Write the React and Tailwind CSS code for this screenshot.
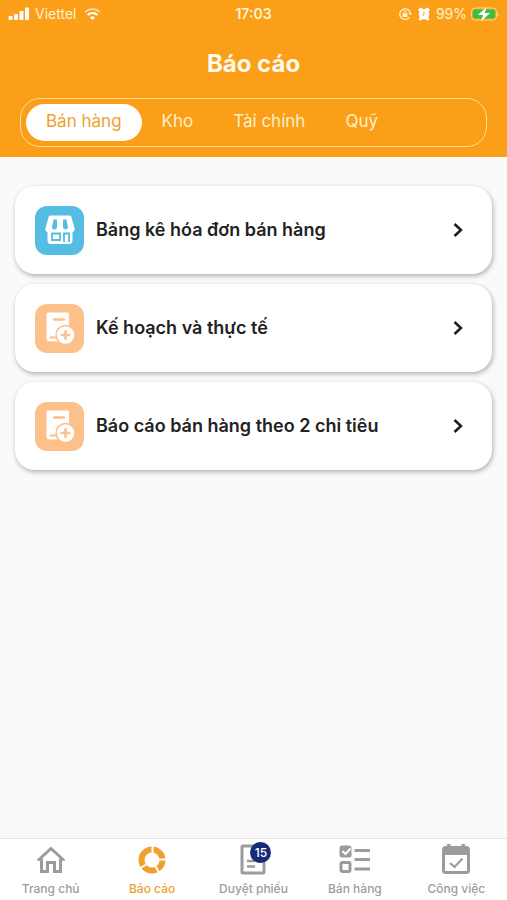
import { useState } from 'react';

const TABS = ['Bán hàng', 'Kho', 'Tài chính', 'Quỹ'];

const REPORTS = [
  { id: 'invoice', title: 'Bảng kê hóa đơn bán hàng', icon: StoreIcon, color: 'bg-[#55bce2]' },
  { id: 'plan', title: 'Kế hoạch và thực tế', icon: BillIcon, color: 'bg-[#fdc08a]' },
  { id: 'target', title: 'Báo cáo bán hàng theo 2 chỉ tiêu', icon: BillIcon, color: 'bg-[#fdc08a]' },
];

const NAV = [
  { id: 'home', label: 'Trang chủ', icon: HomeIcon },
  { id: 'report', label: 'Báo cáo', icon: DonutIcon },
  { id: 'approve', label: 'Duyệt phiếu', icon: DocIcon, badge: 15 },
  { id: 'sales', label: 'Bán hàng', icon: ChecklistIcon },
  { id: 'tasks', label: 'Công việc', icon: CalendarIcon },
];

function StoreIcon() {
  return (
    <svg width="30" height="30" viewBox="0 0 30 30" fill="none">
      <path d="M2.500 14h25v11.500a3.500 3.500 0 0 1-3.500 3.500H6a3.500 3.500 0 0 1-3.500-3.500Z" fill="#fff" />
      <path d="M5.500 0.500h19a2 2 0 0 1 1.800 1.300L29.500 13a3.600 3.600 0 0 1-7.200 1.500 3.700 3.700 0 0 1-7.300 0 3.700 3.700 0 0 1-7.300 0A3.600 3.600 0 0 1 0.500 13L3.700 1.800A2 2 0 0 1 5.500 0.500Z" fill="#fff" />
      <path d="M8.500 4.500H12V12a2.500 2.500 0 0 1-5 0ZM18 4.500h3.500L23 12a2.500 2.500 0 0 1-5 0Z" fill="#55bce2" />
      <path d="M7 18.500h8V25H7ZM19 27v-8.500h5V27" stroke="#55bce2" strokeWidth="1.800" />
    </svg>
  );
}

function BillIcon() {
  return (
    <svg width="30" height="32" viewBox="0 0 30 32" fill="none">
      <path d="M3 0.500h19.500a1.500 1.500 0 0 1 1.500 1.500v14H12v8.500H5.500a1 1 0 0 0 0 2h7v3H5a3.500 3.500 0 0 1-3.500-3.500V2A1.500 1.500 0 0 1 3 0.500Z" fill="#fff" />
      <path d="M9 7.500h10" stroke="#fdc08a" strokeWidth="2.400" strokeLinecap="round" />
      <circle cx="20.500" cy="23" r="10.200" fill="#fdc08a" />
      <circle cx="20.500" cy="23" r="8.700" fill="#fff" />
      <path d="M20.500 19.200v7.600M16.700 23h7.600" stroke="#fdc08a" strokeWidth="2.600" strokeLinecap="round" />
    </svg>
  );
}

function HomeIcon() {
  return (
    <svg width="32" height="32" viewBox="0 0 32 32" fill="none" stroke="currentColor" strokeWidth="3">
      <path d="M3.500 16 16 4.500 28.500 16M6.500 14.500v13h6v-9h7v9h6v-13" />
      <path d="M2 16h5M25 16h5" strokeWidth="1.500" />
    </svg>
  );
}

function DonutIcon() {
  return (
    <svg width="32" height="32" viewBox="0 0 32 32" fill="none">
      <circle cx="16" cy="16" r="10.500" stroke="currentColor" strokeWidth="6" />
      <path d="M16.500 10V0M21.500 15.500H32M19 21.500l4.500 8M11 20l-9 5.500" stroke="#fff" strokeWidth="2" />
    </svg>
  );
}

function DocIcon() {
  return (
    <svg width="32" height="32" viewBox="0 0 32 32" fill="none" stroke="currentColor" strokeWidth="3">
      <rect x="5" y="2" width="22" height="27" rx="1" />
      <path d="M10 17h8M10 22.500h8" strokeWidth="2.500" />
    </svg>
  );
}

function ChecklistIcon() {
  return (
    <svg width="32" height="32" viewBox="0 0 32 32" fill="none">
      <rect x="0.500" y="1.500" width="12" height="12" rx="2.500" fill="currentColor" />
      <path d="m3.500 7 3 3 5-5.500" stroke="#fff" strokeWidth="2" />
      <rect x="2" y="18.500" width="9" height="9" rx="1.500" stroke="currentColor" strokeWidth="3" />
      <path d="M15.500 6.500H31M15.500 15.500H31M15.500 25H31" stroke="currentColor" strokeWidth="3" />
    </svg>
  );
}

function CalendarIcon() {
  return (
    <svg width="32" height="32" viewBox="0 0 32 32" fill="none">
      <rect x="3.500" y="3.500" width="25" height="25" rx="2" stroke="currentColor" strokeWidth="3" />
      <path d="M3 3h26v8H3ZM7-1h3.500v5H7ZM21.500-1H25v5h-3.500Z" fill="currentColor" />
      <path d="m10 19 4.500 4 8-8.500" stroke="currentColor" strokeWidth="2.200" />
    </svg>
  );
}

function StatusBar() {
  return (
    <div className="grid grid-cols-3 items-center h-7 px-2 text-sm text-[#fff3d0]">
      <div className="flex items-center gap-1">
        <svg width="23" height="14" viewBox="0 0 23 14" fill="#fff">
          <rect x="0.500" y="9" width="4" height="4" rx="1" />
          <rect x="6" y="7" width="4" height="6" rx="1" />
          <rect x="11.500" y="4" width="4" height="9" rx="1" />
          <rect x="17" y="0.500" width="4" height="12.500" rx="1" />
        </svg>
        <span>Viettel</span>
        <svg className="ml-1" width="17" height="14" viewBox="0 0 17 14" fill="none" stroke="#fff">
          <path d="M1 5.200a10.500 10.500 0 0 1 15 0" strokeWidth="1.800" opacity="0.600" />
          <path d="M3.600 8a7 7 0 0 1 9.800 0" strokeWidth="2.200" />
          <path d="M8.500 13 6 10.500a3.600 3.600 0 0 1 5 0Z" fill="#fff" stroke="none" />
        </svg>
      </div>
      <span className="text-center font-semibold">17:03</span>
      <div className="flex items-center justify-end gap-1">
        <svg width="14" height="14" viewBox="0 0 14 14" fill="none">
          <path d="M11.500 10a5.300 5.300 0 1 1 0.800-3.500" stroke="#fff3d0" strokeWidth="1.300" />
          <path d="m10.300 6 2 2.300L14 6Z" fill="#fff3d0" />
          <rect x="4.500" y="6.300" width="5" height="3.800" rx="0.500" fill="#fff3d0" />
          <path d="M5.500 6.500V5.300a1.500 1.500 0 0 1 3 0v1.200" stroke="#fff3d0" />
        </svg>
        <svg className="ml-0.5" width="12" height="14" viewBox="0 0 12 14" fill="none">
          <circle cx="6" cy="7.300" r="5.200" fill="#fff" />
          <path d="m1.800 3 1.200-.8M10.200 3 9 2.200M2.200 12l.6-.6M9.800 12l-.6-.6" stroke="#fff" strokeWidth="3" strokeLinecap="round" />
          <path d="M6 4.500v3L4.300 8.300" stroke="#fc9f18" />
        </svg>
        <span className="ml-0.5">99%</span>
        <svg width="28" height="16" viewBox="0 0 28 16" fill="none">
          <rect x="0.500" y="2" width="25" height="12" rx="3.500" stroke="#ffd480" />
          <rect x="2" y="3.500" width="22" height="9" rx="2" fill="#35c24c" />
          <path d="M26.500 6v4.500c1.500-.5 1.500-4 0-4.500Z" fill="#ffd480" />
          <path d="M15.500 1 7 9h5l-2 6.500 9-8.500h-5.200Z" fill="#fff" />
        </svg>
      </div>
    </div>
  );
}

export default function App() {
  const [tab, setTab] = useState('Bán hàng');
  const [page, setPage] = useState('report');

  return (
    <div className="flex flex-col min-h-screen bg-[#fafafa] font-[Inter,sans-serif]">
      <header className="bg-[#fc9f18] pb-[10px]">
        <StatusBar />
        <h1 className="pt-5 pb-[18px] text-2xl leading-8 font-bold text-center text-[#fffaf0]">Báo cáo</h1>
        <div className="flex items-center mx-5 h-[49px] px-[5px] rounded-[20px] border border-[#ffdf9a]">
          {TABS.map((name) => (
            <button
              key={name}
              type="button"
              onClick={() => setTab(name)}
              className={`h-[37px] px-5 rounded-full text-[17px] leading-6 pb-1 cursor-pointer ${tab === name ? 'bg-white text-[#f0a030]' : 'text-[#fff0c8]'}`}
            >
              {name}
            </button>
          ))}
        </div>
      </header>

      <main className="flex-1 flex flex-col gap-[10px] px-[15px] pt-[29px]">
        {REPORTS.map(({ id, title, icon: Icon, color }) => (
          <button
            key={id}
            type="button"
            className="flex items-center gap-3 h-22 px-5 rounded-[20px] bg-white text-left shadow-[1px_2px_5px_rgba(0,0,0,0.3)] cursor-pointer"
          >
            <span className={`flex items-center justify-center size-[49px] rounded-xl ${color}`}>
              <Icon />
            </span>
            <span className="flex-1 text-lg leading-6 font-semibold text-[#222222]">{title}</span>
            <svg className="mr-2" width="12" height="16" viewBox="0 0 12 16" fill="none" stroke="#1c1c1c" strokeWidth="2.500">
              <path d="m2.500 2 6.500 6-6.500 6" />
            </svg>
          </button>
        ))}
      </main>

      <nav className="grid grid-cols-5 h-[62px] border-t border-[#e4e4e4] bg-white">
        {NAV.map(({ id, label, icon: Icon, badge }) => (
          <button
            key={id}
            type="button"
            onClick={() => setPage(id)}
            className={`flex flex-col items-center pt-[5px] gap-1 text-xs font-medium cursor-pointer ${page === id ? 'text-[#f0a030]' : 'text-[#9c9c9c]'}`}
          >
            <span className="relative">
              <Icon />
              {badge && (
                <span className="absolute -top-0.5 -right-0.5 flex items-center justify-center size-[21px] rounded-full bg-[#182c75] text-white text-xs">
                  {badge}
                </span>
              )}
            </span>
            <span className="leading-[18px]">{label}</span>
          </button>
        ))}
      </nav>
    </div>
  );
}
